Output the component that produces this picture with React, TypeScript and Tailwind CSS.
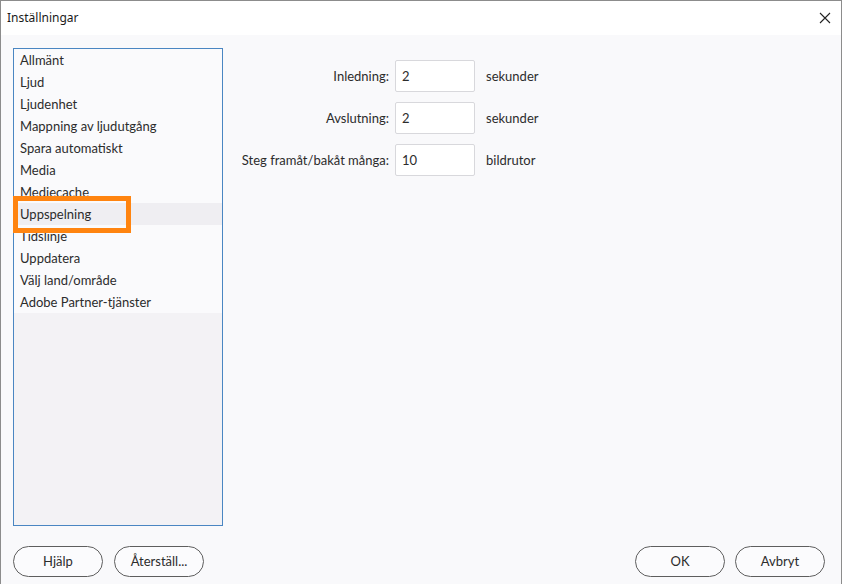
const items = [
  "Allmänt",
  "Ljud",
  "Ljudenhet",
  "Mappning av ljudutgång",
  "Spara automatiskt",
  "Media",
  "Mediecache",
  "Uppspelning",
  "Tidslinje",
  "Uppdatera",
  "Välj land/område",
  "Adobe Partner-tjänster",
];

const rows = [
  { label: "Inledning:", value: "2", unit: "sekunder" },
  { label: "Avslutning:", value: "2", unit: "sekunder" },
  { label: "Steg framåt/bakåt många:", value: "10", unit: "bildrutor" },
];

const PillButton = ({ children }: { children: string }) => (
  <button className="h-[31px] w-[90px] rounded-full border border-[#5e5e5e] bg-[#fbfbfd] text-[13px] text-[#2c2c2c]">
    {children}
  </button>
);

export default function App() {
  return (
    <div className="w-[842px] h-[584px] flex flex-col border-x border-t border-[#8c8c8c] bg-[#f9f9fb] font-['Lato','Noto_Sans',sans-serif] text-[#2c2c2c] overflow-hidden">
      <div className="h-[34px] shrink-0 bg-white flex items-center justify-between pl-[6px] pr-[10px]">
        <span className="text-[12px] text-[#1a1a1a] font-['Noto_Sans',sans-serif]">Inställningar</span>
        <svg width="12" height="12" viewBox="0 0 12 12" className="text-[#222]">
          <path d="M1 1L11 11M11 1L1 11" stroke="currentColor" strokeWidth="1.1" />
        </svg>
      </div>

      <div className="flex-1 flex flex-col pl-[12px] pr-[16px] pt-[13px]">
        <div className="flex">
          <div className="relative w-[210px] h-[478px] border border-[#4a86c2] bg-[#f3f2f5] flex flex-col">
            <ul className="bg-[#fafafc]">
              {items.map((it) => (
                <li
                  key={it}
                  className={
                    "h-[22px] flex items-center pl-[6px] pt-[2px] text-[13px] " +
                    (it === "Uppspelning" ? "bg-[#efeef2]" : "")
                  }
                >
                  {it}
                </li>
              ))}
            </ul>
            <div className="absolute -left-px top-[147px] w-[118px] h-[37px] border-[5px] border-[#ff8410]" />
          </div>

          <div className="ml-[8px] pt-[12px] grid grid-cols-[158px_80px_auto] gap-y-[10px] items-center h-fit">
            {rows.map((r) => (
              <div key={r.label} className="contents">
                <span className="text-right text-[13px] pt-[2px]">{r.label}</span>
                <div className="ml-[6px] w-[80px] h-[32px] border border-[#d8d8dc] bg-white rounded-[2px] flex items-center pl-[6px] pt-[2px] text-[13px]">
                  {r.value}
                </div>
                <span className="ml-[17px] pt-[2px] text-[13px]">{r.unit}</span>
              </div>
            ))}
          </div>
        </div>

        <div className="mt-[20px] flex items-center">
          <div className="flex gap-[11px]">
            <PillButton>Hjälp</PillButton>
            <PillButton>Återställ...</PillButton>
          </div>
          <div className="ml-auto flex gap-[10px]">
            <PillButton>OK</PillButton>
            <PillButton>Avbryt</PillButton>
          </div>
        </div>
      </div>
    </div>
  );
}
